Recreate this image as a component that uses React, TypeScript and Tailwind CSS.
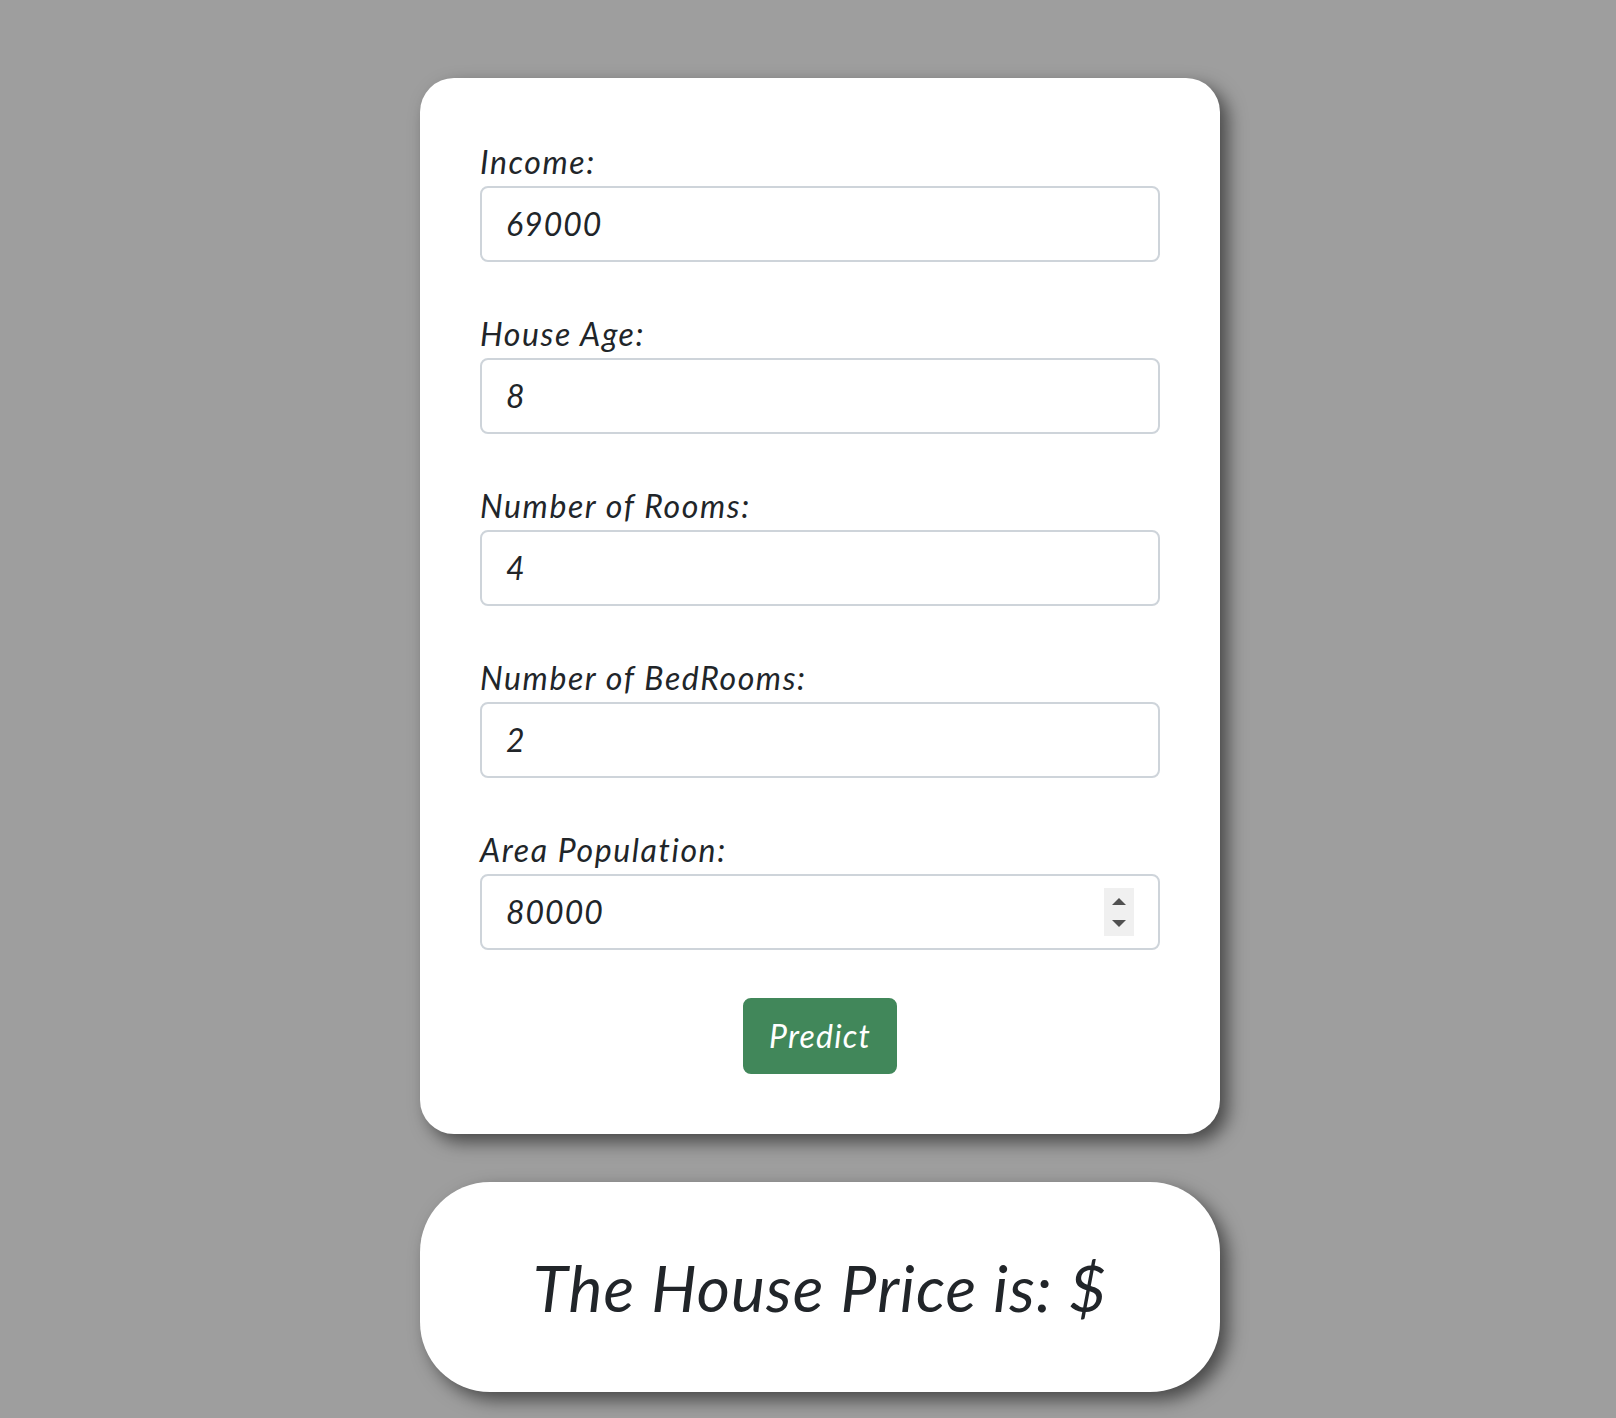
import { useState } from "react";

const fields = [
  { id: "income", label: "Income:", value: "69000" },
  { id: "age", label: "House Age:", value: "8" },
  { id: "rooms", label: "Number of Rooms:", value: "4" },
  { id: "bedrooms", label: "Number of BedRooms:", value: "2" },
  { id: "population", label: "Area Population:", value: "80000", spinner: true },
];

const Spinner = () => (
  <div className="absolute right-[26px] top-[14px] w-[30px] h-[48px] bg-[#f0f0f0] flex flex-col items-center justify-center gap-[15px] pointer-events-none">
    <svg width="14" height="7" viewBox="0 0 14 7" className="block">
      <path d="M7 0 L14 7 L0 7 Z" fill="#505050" />
    </svg>
    <svg width="14" height="7" viewBox="0 0 14 7" className="block">
      <path d="M0 0 L14 0 L7 7 Z" fill="#505050" />
    </svg>
  </div>
);

export default function App() {
  const [values, setValues] = useState<Record<string, string>>(
    Object.fromEntries(fields.map((f) => [f.id, f.value]))
  );

  return (
    <div
      className="min-h-screen bg-[#9e9e9e] pt-[78px] pb-[26px] pl-[24px] flex flex-col items-center text-[#212529]"
      style={{ fontFamily: "Lato, 'Noto Sans', sans-serif" }}
    >
      {/* Form card */}
      <form
        onSubmit={(e) => e.preventDefault()}
        className="w-[800px] bg-white rounded-[34px] p-[60px] shadow-[8px_8px_18px_rgba(0,0,0,0.55)] flex flex-col"
      >
        {fields.map((f) => (
          <div key={f.id} className="mb-[48px]">
            <label htmlFor={f.id} className="block text-[32px] leading-[48px] italic tracking-[1.6px]">
              {f.label}
            </label>
            <div className="relative">
              <input
                id={f.id}
                type="text"
                value={values[f.id]}
                onChange={(e) => setValues({ ...values, [f.id]: e.target.value })}
                className="block w-full h-[76px] border-2 border-[#ced4da] rounded-[8px] px-[24px] pb-[2px] text-[32px] leading-[48px] italic tracking-[1px] text-[#212529] bg-white outline-none"
              />
              {f.spinner && <Spinner />}
            </div>
          </div>
        ))}

        <div className="flex justify-center">
          <button
            type="submit"
            className="h-[76px] px-[24px] border-2 border-[#41875a] bg-[#41875a] rounded-[8px] text-white text-[32px] leading-[48px] italic tracking-[1.2px]"
          >
            Predict
          </button>
        </div>
      </form>

      {/* Result card */}
      <div className="mt-[48px] w-[800px] h-[210px] bg-white rounded-[70px] shadow-[8px_8px_18px_rgba(0,0,0,0.55)] flex items-center justify-center">
        <h2 className="text-[64px] leading-[77px] italic tracking-[1.1px]">The House Price is: $</h2>
      </div>
    </div>
  );
}
